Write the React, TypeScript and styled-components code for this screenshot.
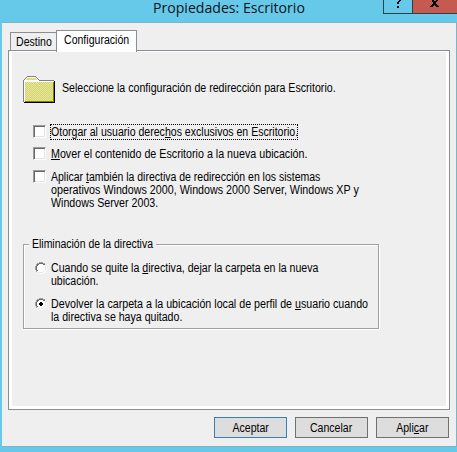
import React from "react";
import styled, { createGlobalStyle, css } from "styled-components";

const GlobalStyle = createGlobalStyle`
  * { box-sizing: border-box; }
  html, body { margin: 0; padding: 0; overflow: hidden; background: #67c9e9; }
`;

const Dialog = styled.div`
  width: 457px;
  height: 452px;
  overflow: hidden;
  background: #67c9e9;
  color: #000;
  font: 12px/13px "Liberation Sans", Arial, sans-serif;
  display: flex;
  flex-direction: column;
`;

const TitleBar = styled.header`
  height: 22px;
  flex: none;
  display: grid;
  grid-template-columns: 153px 1fr 29px 45px;
  align-items: start;
`;

const Title = styled.h1`
  grid-column: 2;
  margin: 0;
  font: 400 15px/14px "Open Sans", "Noto Sans", sans-serif;
  white-space: nowrap;
  transform: scaleX(0.94);
  transform-origin: left;
  color: #0c1418;
`;

const CaptionButton = styled.button<{ $close?: boolean }>`
  height: 14px;
  padding: 0;
  margin: 0;
  border: solid #29434d;
  border-width: 0 0 1px 1px;
  background: ${(p) => (p.$close ? "#c45a50" : "#67c9e9")};
  display: flex;
  justify-content: center;
  svg { display: block; }
`;

const Client = styled.main`
  width: 455px;
  height: 425px;
  flex: none;
  margin-left: 2px;
  padding: 7px 6px 0;
  background: #efefef;
  border: solid #83b2c5;
  border-width: 1px 1px 1px 0;
`;

const TabStrip = styled.div`
  height: 20px;
  padding-left: 2px;
  display: flex;
  align-items: flex-end;
`;

const Tab = styled.div<{ $active?: boolean }>`
  border: 1px solid #8b8c96;
  border-bottom: 0;
  padding-left: 5px;
  ${(p) =>
    p.$active
      ? css`
          width: 81px;
          height: 22px;
          margin: 0 0 -2px -1px;
          padding: 3px 0 0 6.5px;
          background: #fff;
          z-index: 1;
        `
      : css`
          width: 47px;
          height: 18px;
          padding-top: 3px;
          background: #efefef;
        `}
`;

const Pane = styled.section`
  width: 442px;
  height: 360px;
  border: 1px solid #8b8c96;
  background: #efefef;
  box-shadow: inset 3px 1px 0 #fff, inset -3px -3px 0 #fff;
  padding: 25px 14px 0;
`;

const Intro = styled.div`
  height: 49px;
  display: flex;
  gap: 7px;
  svg { flex: none; }
  p { margin: 6px 0 0; }
`;

const Line = styled.span<{ $scale?: number }>`
  display: block;
  width: max-content;
  white-space: nowrap;
  transform: scaleX(${(p) => p.$scale ?? 0.88});
  transform-origin: left;
`;

const Key = styled.span`
  text-decoration: underline;
  text-decoration-thickness: 1px;
  text-underline-offset: 1px;
  text-decoration-skip-ink: none;
`;

const Option = styled.label<{ $height: number }>`
  height: ${(p) => p.$height}px;
  padding-left: 10px;
  display: flex;
  align-items: flex-start;
`;

const CheckBox = styled.span`
  width: 13px;
  height: 13px;
  flex: none;
  background: #fff;
  border: 1px solid;
  border-color: #9a9a9a #fff #fff #9a9a9a;
  box-shadow: inset 1px 1px 0 #696969, inset -1px -1px 0 #e3e3e3;
`;

const OptionText = styled.span<{ $focus?: boolean }>`
  display: block;
  height: 16px;
  margin: -1px 0 0 4px;
  padding: 2px 0 0 1px;
  ${(p) =>
    p.$focus &&
    css`
      width: 248px;
      padding: 1px 0 0;
      border: 1px dotted #000;
    `}
`;

const Group = styled.fieldset`
  width: 356px;
  height: 91px;
  margin: 0;
  padding: 11px 0 0 11px;
  border: 1px solid #a0a0a0;
  box-shadow: 1px 1px 0 #fff, inset 1px 1px 0 #fff;
  min-width: 0;
  legend {
    width: 127px;
    height: 13px;
    margin-left: -6px;
    padding: 0 3px;
    background: #efefef;
  }
`;

const Choice = styled.label`
  height: 36px;
  display: flex;
  align-items: flex-start;
  gap: 4px;
  svg { flex: none; }
`;

const Actions = styled.footer`
  display: flex;
  justify-content: flex-end;
  gap: 8px;
  padding: 7px 0 0;
  width: 441px;
`;

const PushButton = styled.button<{ $primary?: boolean }>`
  width: 73px;
  height: 21px;
  padding: 4px 0 0;
  border: 1px solid ${(p) => (p.$primary ? "#3a7fb1" : "#707070")};
  background: #dddddd;
  color: #000;
  font: inherit;
  display: flex;
  justify-content: center;
  ${Line} { transform-origin: center; }
`;

const HelpGlyph = () => (
  <svg width="8" height="8" viewBox="0 0 8 8" shapeRendering="crispEdges">
    <path d="M5 0h2v1h-1v1h-1v1h-2v-1h1v-1h1zM3 3h2v1h-2zM3 6h2v2h-2z" />
  </svg>
);

const CloseGlyph = () => (
  <svg width="10" height="7" viewBox="0 0 10 7" shapeRendering="crispEdges">
    <path d="M2 0h2v1h2v-1h2v1h-1v1h-1v2h1v1h1v1h1v1h-3v-1h-1v-1h-1v1h-1v1h-3v-1h1v-1h1v-1h1v-2h-1v-1h-1z" />
  </svg>
);

const ditherDots = (x0: number, y0: number, w: number, h: number) => {
  let d = "";
  for (let y = y0; y < y0 + h; y++)
    for (let x = x0; x < x0 + w; x++) if ((x + y) % 2 === 0) d += `M${x} ${y}h1v1h-1z`;
  return d;
};

const Folder = () => (
  <svg width="32" height="28" viewBox="0 0 32 28" shapeRendering="crispEdges">
    <path d="M1 4h1V3h1V2h1V1h10v1h1v1h1v1h15v22H1z" fill="#fff" />
    <path d="M4 2h9v1h1v1h-11v-1h1zM2 6h28v19H2z" fill="#f2f23c" />
    <path d={ditherDots(4, 2, 9, 2) + ditherDots(2, 6, 28, 19)} fill="#c8c8d0" />
    <path d="M4 0h9v1h-9zM3 1h1v1h-1zM2 2h1v1h-1zM1 3h1v1h-1zM13 1h1v1h-1zM14 2h1v1h-1zM15 3h1v1h-1zM16 4h15v1h-15zM0 4h1v22h-1z" fill="#808080" />
    <path d="M30 6h1v20h-1zM2 25h28v1h-28z" fill="#808000" />
    <path d="M31 5h1v22h-31v-1h30z" />
  </svg>
);

const Radio = ({ checked = false }: { checked?: boolean }) => (
  <svg width="12" height="12" viewBox="0 0 12 12" shapeRendering="crispEdges">
    <path d="M4 1h4v1h2v2h1v4h-1v2h-2v1h-4v-1h-2v-2h-1v-4h1v-2h2z" fill="#fff" />
    <path d="M4 0h4v1h-4zM2 1h2v1h-2zM8 1h2v1h-2zM1 2h1v2h-1zM0 4h1v4h-1zM1 8h1v2h-1z" fill="#a0a0a0" />
    <path d="M4 1h4v1h-4zM2 2h2v1h-1v1h-1zM8 2h2v1h-2zM1 4h1v4h-1zM2 8h1v1h-1z" fill="#696969" />
    <path d="M10 4h1v4h-1zM9 8h1v1h-1zM8 9h1v1h-1zM4 10h4v1h-4z" fill="#e3e3e3" />
    <path d="M11 4h1v4h-1zM10 8h1v2h-1zM8 10h2v1h-2zM4 11h4v1h-4z" fill="#fff" />
    {checked && <path d="M5 4h2v1h1v2h-1v1h-2v-1h-1v-2h1z" fill="#000" />}
  </svg>
);

export default function App() {
  return (
    <>
      <GlobalStyle />
      <Dialog>
        <TitleBar>
          <Title>Propiedades: Escritorio</Title>
          <CaptionButton aria-label="Ayuda"><HelpGlyph /></CaptionButton>
          <CaptionButton $close aria-label="Cerrar"><CloseGlyph /></CaptionButton>
        </TitleBar>
        <Client>
          <TabStrip>
            <Tab><Line>Destino</Line></Tab>
            <Tab $active><Line>Configuración</Line></Tab>
          </TabStrip>
          <Pane>
            <Intro>
              <Folder />
              <p><Line $scale={0.886}>Seleccione la configuración de redirección para Escritorio.</Line></p>
            </Intro>
            <Option $height={22}>
              <CheckBox />
              <OptionText $focus>
                <Line>Otorgar al usuario derec<Key>h</Key>os exclusivos en Escritorio.</Line>
              </OptionText>
            </Option>
            <Option $height={23}>
              <CheckBox />
              <OptionText>
                <Line $scale={0.892}><Key>M</Key>over el contenido de Escritorio a la nueva ubicación.</Line>
              </OptionText>
            </Option>
            <Option $height={68}>
              <CheckBox />
              <OptionText>
                <Line $scale={0.874}>Aplicar <Key>t</Key>ambién la directiva de redirección en los sistemas</Line>
                <Line $scale={0.893}>operativos Windows 2000, Windows 2000 Server, Windows XP y</Line>
                <Line $scale={0.888}>Windows Server 2003.</Line>
              </OptionText>
            </Option>
            <Group>
              <legend><Line $scale={0.872}>Eliminación de la directiva</Line></legend>
              <Choice>
                <Radio />
                <span>
                  <Line $scale={0.883}>Cuando se quite la <Key>d</Key>irectiva, dejar la carpeta en la nueva</Line>
                  <Line>ubicación.</Line>
                </span>
              </Choice>
              <Choice>
                <Radio checked />
                <span>
                  <Line $scale={0.89}>Devolver la carpeta a la ubicación local de perfil de <Key>u</Key>suario cuando</Line>
                  <Line $scale={0.883}>la directiva se haya quitado.</Line>
                </span>
              </Choice>
            </Group>
          </Pane>
          <Actions>
            <PushButton $primary><Line>Aceptar</Line></PushButton>
            <PushButton><Line>Cancelar</Line></PushButton>
            <PushButton><Line>Apli<Key>c</Key>ar</Line></PushButton>
          </Actions>
        </Client>
      </Dialog>
    </>
  );
}
